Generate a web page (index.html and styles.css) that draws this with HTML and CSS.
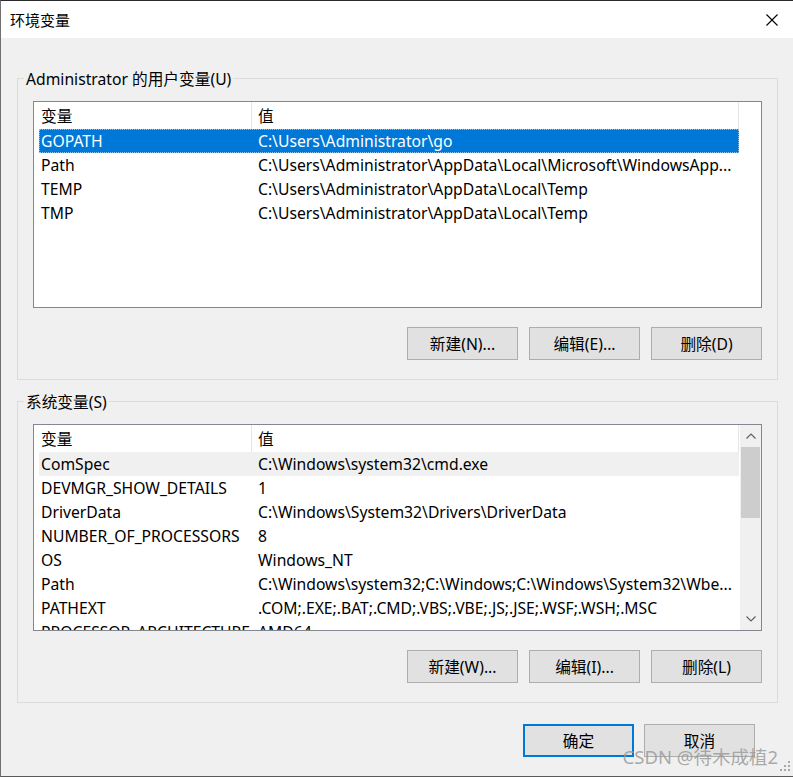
FILE: index.html
```html
<!DOCTYPE html>
<html lang="zh-CN">
<head>
<meta charset="utf-8">
<title>环境变量</title>
<link rel="stylesheet" href="styles.css">
</head>
<body>
<div class="window">
  <div class="titlebar">
    <span class="title">环境变量</span>
    <svg class="close" width="12" height="12" viewBox="0 0 12 12"><path d="M0.5 0.5 L11.5 11.5 M11.5 0.5 L0.5 11.5" stroke="#000" stroke-width="1.1" fill="none"/></svg>
  </div>
  <div class="client">
    <section class="group">
      <div class="legend">Administrator 的用户变量(U)</div>
      <div class="listview">
        <div class="lv-main">
          <div class="lv-header"><div class="hc c1">变量</div><div class="hc c2">值</div></div>
          <div class="row selected"><span class="c1">GOPATH</span><span class="c2">C:\Users\Administrator\go</span></div>
          <div class="row"><span class="c1">Path</span><span class="c2">C:\Users\Administrator\AppData\Local\Microsoft\WindowsApp...</span></div>
          <div class="row"><span class="c1">TEMP</span><span class="c2">C:\Users\Administrator\AppData\Local\Temp</span></div>
          <div class="row"><span class="c1">TMP</span><span class="c2">C:\Users\Administrator\AppData\Local\Temp</span></div>
        </div>
      </div>
      <div class="btnrow">
        <button class="btn">新建(N)...</button>
        <button class="btn">编辑(E)...</button>
        <button class="btn">删除(D)</button>
      </div>
    </section>
    <section class="group">
      <div class="legend">系统变量(S)</div>
      <div class="listview">
        <div class="lv-main">
          <div class="lv-header"><div class="hc c1">变量</div><div class="hc c2">值</div></div>
          <div class="row hover"><span class="c1">ComSpec</span><span class="c2">C:\Windows\system32\cmd.exe</span></div>
          <div class="row"><span class="c1">DEVMGR_SHOW_DETAILS</span><span class="c2">1</span></div>
          <div class="row"><span class="c1">DriverData</span><span class="c2">C:\Windows\System32\Drivers\DriverData</span></div>
          <div class="row"><span class="c1">NUMBER_OF_PROCESSORS</span><span class="c2">8</span></div>
          <div class="row"><span class="c1">OS</span><span class="c2">Windows_NT</span></div>
          <div class="row"><span class="c1">Path</span><span class="c2">C:\Windows\system32;C:\Windows;C:\Windows\System32\Wbe...</span></div>
          <div class="row"><span class="c1">PATHEXT</span><span class="c2">.COM;.EXE;.BAT;.CMD;.VBS;.VBE;.JS;.JSE;.WSF;.WSH;.MSC</span></div>
          <div class="row"><span class="c1">PROCESSOR_ARCHITECTURE</span><span class="c2">AMD64</span></div>
        </div>
        <div class="scrollbar">
          <div class="sb-btn"><svg width="10" height="6" viewBox="0 0 10 6"><path d="M0.5 5.5 L5 1 L9.5 5.5" stroke="#606060" stroke-width="1.2" fill="none"/></svg></div>
          <div class="sb-track"><div class="sb-thumb"></div></div>
          <div class="sb-btn"><svg width="10" height="6" viewBox="0 0 10 6"><path d="M0.5 0.5 L5 5 L9.5 0.5" stroke="#606060" stroke-width="1.2" fill="none"/></svg></div>
        </div>
      </div>
      <div class="btnrow">
        <button class="btn">新建(W)...</button>
        <button class="btn">编辑(I)...</button>
        <button class="btn">删除(L)</button>
      </div>
    </section>
    <div class="dlg-buttons">
      <button class="btn btn-default">确定</button>
      <button class="btn">取消</button>
    </div>
  </div>
  <div class="watermark">CSDN @待木成植2</div>
  <svg class="grip" width="12" height="10" viewBox="0 0 12 10">
    <rect x="9" y="0" width="2" height="2" fill="#a8a8a8"/>
    <rect x="5" y="4" width="2" height="2" fill="#a8a8a8"/>
    <rect x="9" y="4" width="2" height="2" fill="#a8a8a8"/>
    <rect x="1" y="8" width="2" height="2" fill="#a8a8a8"/>
    <rect x="5" y="8" width="2" height="2" fill="#a8a8a8"/>
    <rect x="9" y="8" width="2" height="2" fill="#a8a8a8"/>
  </svg>
</div>
</body>
</html>
```
FILE: styles.css
```css
html, body {
  margin: 0;
  padding: 0;
  background: #f0f0f0;
}
body {
  font-family: "Noto Sans", "Noto Sans CJK SC", sans-serif;
  font-size: 15.7px;
  color: #000;
}
.window {
  position: relative;
  width: 793px;
  height: 777px;
  box-sizing: border-box;
  border-top: 1px solid #2b2b2b;
  border-left: 1px solid #707070;
  border-bottom: 1px solid #5a5a5a;
  display: flex;
  flex-direction: column;
  overflow: hidden;
}
.titlebar {
  height: 37px;
  flex: none;
  background: #fff;
  display: flex;
  align-items: center;
  justify-content: space-between;
  padding: 0 15px 0 9px;
}
.title {
  line-height: 20px;
  font-size: 15px;
}
.close {
  display: block;
}
.client {
  flex: 1;
  background: #f0f0f0;
  padding-top: 40px;
}
.group {
  margin: 0 15px 0 16px;
  border: 1px solid #dcdcdc;
  padding: 0 15px 19px;
}
.group + .group {
  margin-top: 21px;
}
.legend {
  width: max-content;
  margin: -10px 0 0 -9px;
  padding: 0 2px;
  background: #f0f0f0;
  line-height: 20px;
}
.listview {
  margin-top: 12px;
  height: 207px;
  box-sizing: border-box;
  border: 1px solid #828790;
  background: #fff;
  display: flex;
  overflow: hidden;
}
.lv-main {
  flex: 1;
  overflow: hidden;
}
.lv-header {
  display: grid;
  grid-template-columns: 217px 488px;
  height: 27px;
}
.hc {
  box-sizing: border-box;
  height: 27px;
  padding: 1px 0 0 7px;
  line-height: 26px;
}
.hc.c2 {
  padding-left: 6px;
  border-left: 1px solid #e5e5e5;
  border-right: 1px solid #e5e5e5;
}
.row {
  display: grid;
  grid-template-columns: 212px 488px;
  margin-left: 5px;
  width: 700px;
  height: 24px;
  line-height: 24px;
  white-space: nowrap;
  box-sizing: border-box;
}
.row span {
  overflow: hidden;
  box-sizing: border-box;
}
.row .c1 {
  padding-left: 2px;
}
.row .c2 {
  padding-left: 7px;
}
.row.selected {
  background: #0078d7;
  color: #fff;
  outline: 1px dotted #8cc3ef;
  outline-offset: -1px;
}
.row.hover {
  background: #f0f0f0;
}
.scrollbar {
  width: 21px;
  flex: none;
  background: #f0f0f0;
  display: flex;
  flex-direction: column;
}
.sb-btn {
  height: 22px;
  display: flex;
  align-items: center;
  justify-content: center;
}
.sb-btn svg {
  display: block;
}
.sb-track {
  flex: 1;
}
.sb-thumb {
  height: 71px;
  margin: 0 1px;
  background: #cdcdcd;
}
.btnrow {
  display: flex;
  justify-content: flex-end;
  gap: 11px;
  margin-top: 19px;
}
.btn {
  width: 111px;
  height: 33px;
  box-sizing: border-box;
  background: #e1e1e1;
  border: 1px solid #adadad;
  font: inherit;
  color: #000;
  padding: 0;
  margin: 0;
}
.btn-default {
  border: 2px solid #0078d7;
}
.dlg-buttons {
  display: flex;
  justify-content: flex-end;
  gap: 10px;
  margin-top: 21px;
  padding-right: 38px;
}
.watermark {
  position: absolute;
  right: 15px;
  bottom: 8px;
  font-size: 18.5px;
  line-height: 22px;
  color: rgba(150, 150, 150, 0.8);
  white-space: nowrap;
}
.grip {
  position: absolute;
  right: 2px;
  bottom: 5px;
}
```
